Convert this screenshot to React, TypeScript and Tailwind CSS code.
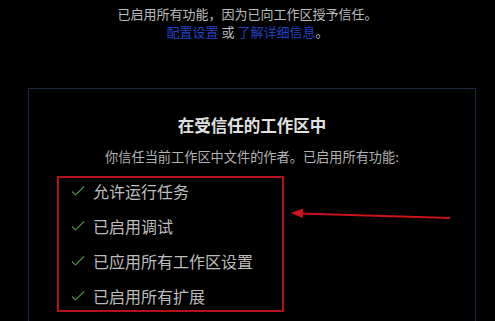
import React from 'react';

const items = ['允许运行任务', '已启用调试', '已应用所有工作区设置', '已启用所有扩展'];

const Check: React.FC = () => (
  <svg width="14" height="12" viewBox="0 0 14 12" className="shrink-0">
    <path d="M1 6.5 L4.5 10 L13 1.5" fill="none" stroke="#4a8a4a" strokeWidth="1.2" />
  </svg>
);

const App: React.FC = () => {
  return (
    <div className="relative h-[321px] w-[495px] overflow-hidden bg-black" style={{ fontFamily: '"Noto Sans CJK SC", "Noto Sans", sans-serif' }}>
      <div className="pt-[5px] text-center text-[13px] leading-[18px]">
        <div className="text-[#bdbdbd]">已启用所有功能，因为已向工作区授予信任。</div>
        <div className="text-[#bdbdbd]">
          <span className="text-[#2442c0]">配置设置</span> 或 <span className="text-[#2442c0]">了解详细信息</span>。
        </div>
      </div>

      <div className="ml-[28px] mt-[47px] h-[300px] w-[448px] border border-[#1c2846] pt-[25px]">
        <h2 className="text-center text-[16.5px] font-bold leading-[22px] text-[#e0e0e0]">在受信任的工作区中</h2>
        <p className="mt-[12px] text-center text-[13.2px] leading-[18px] text-[#b3b3b3]">你信任当前工作区中文件的作者。已启用所有功能:</p>
        <div className="ml-[28px] mt-[10px] flex w-[227px] flex-col gap-[9px] border-2 border-[#b3121c] pl-[12px] pb-[1px]">
          {items.map((t) => (
            <div key={t} className="flex h-[26px] items-center gap-[8px] text-[16px] text-[#bdbdbd]">
              <Check />
              <span>{t}</span>
            </div>
          ))}
        </div>
      </div>

      {/* annotation arrow */}
      <svg className="absolute left-0 top-0" width="495" height="321">
        <line x1="300" y1="213.5" x2="450" y2="218" stroke="#c8141c" strokeWidth="2" />
        <polygon points="291,213 303,208.5 302.5,218" fill="#d0141c" />
      </svg>
    </div>
  );
};

export default App;
